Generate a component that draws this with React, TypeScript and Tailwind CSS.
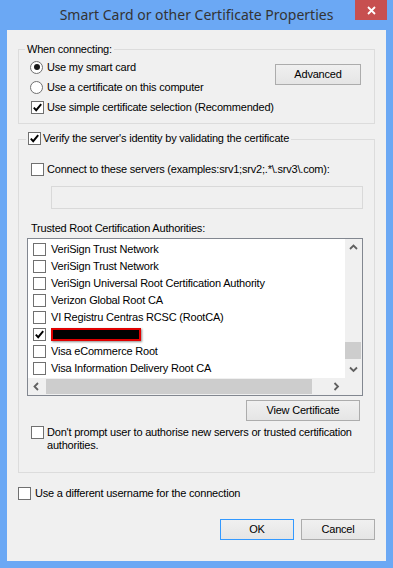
import React from "react";

function CheckBox({ checked = false }: { checked?: boolean }) {
  return (
    <div className="w-[13px] h-[13px] shrink-0 border border-[#707070] bg-white flex items-center justify-center">
      {checked && (
        <svg width="11" height="11" viewBox="0 0 11 11">
          <path d="M1.8 5.6 L4.2 8.2 L9.2 2.2" stroke="#000" strokeWidth="1.9" fill="none" strokeLinejoin="miter" />
        </svg>
      )}
    </div>
  );
}

function Radio({ on = false }: { on?: boolean }) {
  return (
    <div className="w-[13px] h-[13px] shrink-0 rounded-full border border-[#707070] bg-white flex items-center justify-center">
      {on && <div className="w-[6px] h-[6px] rounded-full bg-[#1a1a1a]" />}
    </div>
  );
}

function Btn({ label, w, primary = false }: { label: string; w: string; primary?: boolean }) {
  return (
    <div
      className={
        "h-[21px] flex items-center justify-center border bg-linear-to-b from-[#f0f0f0] to-[#e5e5e5] " +
        w +
        (primary ? " border-[#3399ff]" : " border-[#acacac]")
      }
    >
      {label}
    </div>
  );
}

function Chevron({ dir }: { dir: "up" | "down" | "left" | "right" }) {
  const d =
    dir === "up"
      ? "M1 6 L4.5 2.5 L8 6"
      : dir === "down"
      ? "M1 2.5 L4.5 6 L8 2.5"
      : dir === "left"
      ? "M6 1 L2.5 4.5 L6 8"
      : "M2.5 1 L6 4.5 L2.5 8";
  return (
    <svg width="9" height="9" viewBox="0 0 9 9">
      <path d={d} stroke="#606060" strokeWidth="1.8" fill="none" />
    </svg>
  );
}

const rows: { text?: string; checked?: boolean }[] = [
  { text: "VeriSign Trust Network" },
  { text: "VeriSign Trust Network" },
  { text: "VeriSign Universal Root Certification Authority" },
  { text: "Verizon Global Root CA" },
  { text: "VI Registru Centras RCSC (RootCA)" },
  { checked: true },
  { text: "Visa eCommerce Root" },
  { text: "Visa Information Delivery Root CA" },
];

export default function App() {
  return (
    <div className="w-[393px] h-[568px] bg-[#6ba8f4] flex flex-col overflow-hidden">
      {/* Title bar */}
      <div className="relative h-[30px] shrink-0 flex items-center justify-center">
        <span className="font-['Noto_Sans',sans-serif] text-[14px] text-[#333333] leading-none">
          Smart Card or other Certificate Properties
        </span>
        <div className="absolute right-[6px] top-0 w-[32px] h-[20px] bg-[#c75050] flex items-center justify-center">
          <svg width="9" height="9" viewBox="0 0 9 9">
            <path d="M1 1 L8 8 M8 1 L1 8" stroke="#fff" strokeWidth="1.8" />
          </svg>
        </div>
      </div>

      {/* Client area */}
      <div className="ml-[7px] w-[379px] h-[531px] bg-[#f0f0f0] flex flex-col font-['Liberation_Sans',Arial,sans-serif] text-[11px] leading-[13px] tracking-[-0.2px] text-black">
        {/* Group 1 */}
        <div className="mt-[19px] mx-[11px] border border-[#dcdcdc] flex flex-col">
          <div className="-mt-[7px] ml-[6px] px-[2px] bg-[#f0f0f0] self-start">When connecting:</div>
          <div className="flex mt-[1px] pb-[6px]">
            <div className="flex flex-col ml-[11px]">
              <div className="h-[20px] flex items-center">
                <div className="w-[17px]">
                  <Radio on />
                </div>
                <span>Use my smart card</span>
              </div>
              <div className="h-[20px] flex items-center">
                <div className="w-[17px]">
                  <Radio />
                </div>
                <span>Use a certificate on this computer</span>
              </div>
              <div className="h-[20px] flex items-center">
                <div className="w-[17px] pl-[1px]">
                  <CheckBox checked />
                </div>
                <span>Use simple certificate selection (Recommended)</span>
              </div>
            </div>
            <div className="ml-auto mr-[13px] mt-[7px]">
              <Btn label="Advanced" w="w-[86px]" />
            </div>
          </div>
        </div>

        {/* Group 2 */}
        <div className="mt-[15px] mx-[11px] border border-[#dcdcdc] flex flex-col">
          <div className="-mt-[8px] ml-[7px] pl-[2px] pr-[2px] bg-[#f0f0f0] self-start flex items-center gap-[2px] h-[13px]">
            <CheckBox checked />
            <span>Verify the server's identity by validating the certificate</span>
          </div>

          <div className="mt-[18px] ml-[12px] flex items-center gap-[3px] h-[13px]">
            <CheckBox />
            <span>{"Connect to these servers (examples:srv1;srv2;.*\\.srv3\\.com):"}</span>
          </div>

          <div className="mt-[10px] ml-[32px] w-[312px] h-[23px] border border-[#d9d9d9] bg-[#f0f0f0]" />

          <div className="mt-[13px] ml-[12px]">Trusted Root Certification Authorities:</div>

          {/* List */}
          <div className="mt-[3px] ml-[8px] w-[336px] h-[158px] border border-[#828790] bg-white flex flex-col">
            <div className="flex flex-1 min-h-0">
              <div className="flex-1 flex flex-col pt-[2px] overflow-hidden">
                {rows.map((r, i) => (
                  <div key={i} className="h-[17px] shrink-0 flex items-center pl-[5px] whitespace-nowrap">
                    <CheckBox checked={r.checked} />
                    {r.text ? (
                      <span className="ml-[5px]">{r.text}</span>
                    ) : (
                      <div className="ml-[5px] w-[90px] h-[13px] bg-black border-2 border-[#e00000] shadow-[1px_1px_2px_rgba(0,0,0,0.45)]" />
                    )}
                  </div>
                ))}
              </div>
              <div className="w-[17px] bg-[#f0f0f0] flex flex-col">
                <div className="h-[17px] flex items-center justify-center">
                  <Chevron dir="up" />
                </div>
                <div className="flex-1">
                  <div className="mt-[86px] h-[17px] w-[16px] bg-[#cdcdcd]" />
                </div>
                <div className="h-[17px] flex items-center justify-center">
                  <Chevron dir="down" />
                </div>
              </div>
            </div>
            <div className="h-[17px] shrink-0 flex bg-[#f0f0f0]">
              <div className="w-[17px] flex items-center justify-center">
                <Chevron dir="left" />
              </div>
              <div className="ml-[1px] w-[266px] my-[1px] bg-[#cdcdcd]" />
              <div className="flex-1" />
              <div className="w-[17px] flex items-center justify-center">
                <Chevron dir="right" />
              </div>
              <div className="w-[17px]" />
            </div>
          </div>

          <div className="mt-[4px] self-end mr-[14px]">
            <Btn label="View Certificate" w="w-[114px]" />
          </div>

          <div className="mt-[5px] ml-[12px] flex items-start gap-[3px] pb-[20px]">
            <CheckBox />
            <span className="w-[318px]">
              Don't prompt user to authorise new servers or trusted certification authorities.
            </span>
          </div>
        </div>

        <div className="mt-[14px] ml-[11px] flex items-center gap-[4px] h-[13px]">
          <CheckBox />
          <span>Use a different username for the connection</span>
        </div>

        <div className="mt-[19px] mr-[11px] flex justify-end gap-[7px]">
          <Btn label="OK" w="w-[74px]" primary />
          <Btn label="Cancel" w="w-[74px]" />
        </div>
      </div>
    </div>
  );
}
